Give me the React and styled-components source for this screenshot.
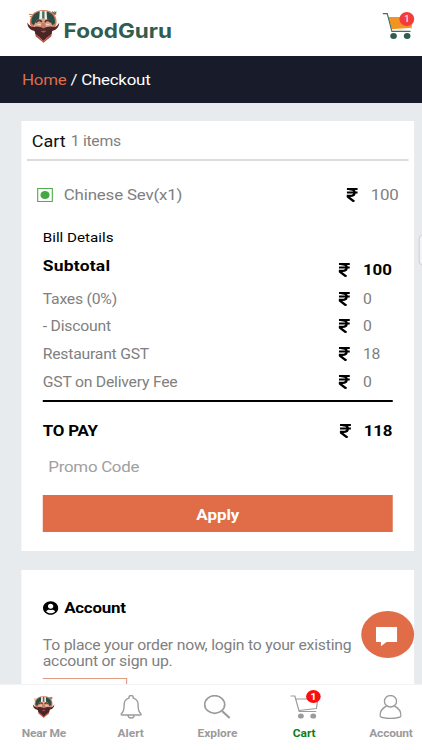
import React, { useState } from "react";
import styled, { createGlobalStyle } from "styled-components";
import { FaUserCircle } from "react-icons/fa";

const GlobalStyle = createGlobalStyle`
  * {
    box-sizing: border-box;
  }
  body {
    margin: 0;
    overflow: hidden;
    background: #e8ebee;
    font-family: Roboto, "Liberation Sans", sans-serif;
  }
`;
// 375px wide layout stretched over the wider screen
const Screen = styled.div`
  position: relative;
  width: 375px;
  height: 750px;
  overflow: hidden;
  display: flex;
  flex-direction: column;
  transform: scaleX(1.12533);
  transform-origin: 0 0;
`;
const Header = styled.header`
  height: 56px;
  flex: none;
  background: #fff;
  display: flex;
  justify-content: space-between;
  align-items: flex-start;
  padding: 10px 7.5px 0 23.5px;
`;
const Brand = styled.div`
  display: flex;
  align-items: flex-start;
`;
const BrandName = styled.span`
  font-family: Inter, sans-serif;
  font-weight: 700;
  font-size: 20px;
  line-height: 24px;
  letter-spacing: 0;
  color: #315c50;
  margin: 8.5px 0 0 4px;
`;
const HeaderCart = styled.div`
  position: relative;
  padding-top: 3px;
`;
const Badge = styled.span`
  position: absolute;
  top: ${(p) => p.$top}px;
  left: ${(p) => p.$left}px;
  width: 13.5px;
  height: 13.5px;
  border-radius: 50%;
  background: ${(p) => p.$color};
  color: #fff;
  font-size: 9px;
  line-height: 15px;
  text-align: center;
`;
const Breadcrumb = styled.nav`
  height: 46.5px;
  flex: none;
  background: #171b2a;
  color: #fff;
  font-size: 15px;
  line-height: 48px;
  padding-left: 19.5px;
  letter-spacing: ${(p) => p.$spacing}px;
`;
const Accent = styled.span`
  color: #df6d49;
`;
const Content = styled.main`
  flex: 1;
  background: #e8ebee;
  padding: 18.5px 7px 0 19.2px;
  overflow: hidden;
`;
const Card = styled.section`
  background: #fff;
  height: ${(p) => p.$height}px;
  margin-bottom: 18.5px;
  overflow: hidden;
`;
const CardHead = styled.div`
  height: 40px;
  margin: 0 5px;
  padding: 2px 0 0 4px;
  border-bottom: 2px solid #dcdcdc;
  display: flex;
  align-items: center;
  gap: 4.5px;
`;
const Text = styled.span`
  font-size: ${(p) => p.$size || 14}px;
  font-weight: ${(p) => p.$weight || 400};
  color: ${(p) => p.$color || "#808080"};
  letter-spacing: ${(p) => p.$spacing || 0}px;
  white-space: nowrap;
`;
const ItemRow = styled.div`
  height: 68px;
  display: flex;
  align-items: center;
  padding: 0 13.5px 0 13.5px;
`;
const VegMark = styled.span`
  width: 14px;
  height: 14px;
  border: 1.3px solid #4eae4b;
  display: flex;
  align-items: center;
  justify-content: center;
  margin-right: 10px;
  &::after {
    content: "";
    width: 8px;
    height: 7.5px;
    border-radius: 50%;
    background: #43a83f;
  }
`;
const Price = styled.span`
  margin-left: auto;
  display: flex;
  align-items: center;
  gap: 11.5px;
  width: ${(p) => p.$width || 48.2}px;
  padding-top: ${(p) => p.$drop || 0}px;
`;
const Bill = styled.div`
  padding: 0 18.8px;
`;
const BillTitle = styled.div`
  height: 17px;
  line-height: 17px;
  display: flex;
`;
const BillRow = styled.div`
  height: ${(p) => p.$height || 27.6}px;
  display: flex;
  align-items: center;
`;
const TotalRow = styled.div`
  height: 51px;
  margin-top: 4.6px;
  padding-top: 9px;
  border-top: 2px solid #000;
  display: flex;
  align-items: center;
`;
const PromoInput = styled.input`
  display: block;
  width: 100%;
  height: 32px;
  padding: 0 5px;
  border: 0;
  outline: none;
  font: 15px Roboto, sans-serif;
  letter-spacing: ${(p) => p.$spacing}px;
  &::placeholder {
    color: #a0a0a0;
  }
`;
const ApplyButton = styled.button`
  display: block;
  width: 100%;
  height: 37.5px;
  margin-top: 12px;
  border: 0;
  background: #e06d47;
  color: #fff;
  font: 700 15px Roboto, sans-serif;
  padding: 2px 0 0;
`;
const AccountHead = styled.h4`
  display: flex;
  align-items: center;
  gap: 5px;
  height: 20px;
  margin: 0;
`;
const AccountBody = styled.div`
  padding: 28px 18.8px 0;
`;
const AccountText = styled.p`
  margin: 20.5px 0 9px;
  font-size: 14px;
  line-height: 15.5px;
  letter-spacing: ${(p) => p.$spacing}px;
  color: #808080;
`;
const LoginButton = styled.button`
  display: block;
  width: 75px;
  height: 40px;
  border: 1px solid #e09a80;
  border-left: 0;
  background: #fff;
`;
const SideTab = styled.div`
  position: absolute;
  top: 234px;
  right: -10px;
  width: 13px;
  height: 32px;
  background: #f4f5f7;
  border: 1px solid #cfd1d6;
  border-radius: 5px;
`;
const ChatButton = styled.button`
  position: absolute;
  top: 610.5px;
  left: 320.6px;
  width: 47px;
  height: 47px;
  border: 0;
  border-radius: 50%;
  background: #e06d47;
  display: flex;
  align-items: center;
  justify-content: center;
  padding: 5px 1px 0 0;
`;
const TabBar = styled.nav`
  height: 66px;
  flex: none;
  background: #fff;
  border-top: 1px solid #f3f3f3;
  display: grid;
  grid-template-columns: repeat(5, 77.1px);
`;
const Tab = styled.button`
  position: relative;
  border: 0;
  background: none;
  padding: 7px 0 0 1px;
  display: flex;
  flex-direction: column;
  align-items: center;
  color: ${(p) => (p.$active ? "#0b7f14" : "#9b9b9b")};
  font: 700 10.6px Roboto, sans-serif;
  letter-spacing: ${(p) => p.$spacing || 0}px;
`;
const TabIcon = styled.span`
  position: relative;
  height: 30px;
  display: flex;
  align-items: center;
  margin-bottom: 5px;
`;

const Rupee = () => (
  <svg width="10" height="14" viewBox="0 0 11 14" preserveAspectRatio="none" fill="none" stroke="#000">
    <path d="M.2 1h10.600M.2 4.500h10.600" strokeWidth="1.900" />
    <path d="M2.500 1c3.500 0 5.200 1.300 5.200 3.400S6 7.900 3.500 7.900H.8v.5l6.700 5.300" strokeWidth="2.300" />
  </svg>
);

const Chef = ({ width, height }) => (
  <svg width={width} height={height} viewBox="0 0 97 100" preserveAspectRatio="none">
    <path d="M6 13l14 2M8 20l10 1M73 13l10-9M77 16l10-4" stroke="#c97857" strokeWidth="3" />
    <path d="M74 3c0 7 3 11 8 10 5 0 6-5 5-9l-6 4z" fill="#3d7560" />
    <path d="M9 45C5 18 22 0 49 0s43 18 38 45L49 99z" fill="#d67b5a" />
    <path d="M13 40C11 17 26 4 48 4s37 13 35 36L72 49H24z" fill="#284e47" />
    <path d="M38 3h20l2 27H36z" fill="#f4eee4" />
    <path d="M45 4h7v24h-7z" fill="#3f7264" />
    <path d="M20 48l9-18 19-5 19 5 9 18-7 15H28z" fill="#dfa48a" />
    <path d="M27 38c4-8 13-9 17-1M53 37c5-8 14-7 17 1" fill="none" stroke="#56322f" strokeWidth="5" />
    <path d="M31 44h10M56 44h10" stroke="#f3d5bf" strokeWidth="3" />
    <path d="M44 39h9l4 14-8 5-9-5z" fill="#c77c65" />
    <path d="M1 38c6 11 15 17 25 12 10-1 17 2 23 6 6-4 14-7 23-6 10 5 19-1 24-12-1 17-12 24-20 25L49 94 21 63C11 61 1 54 1 38z" fill="#50272b" />
    <path d="M23 66l26 30 26-30-3 14-23 19-23-19z" fill="#b65042" />
    <path d="M22 58l3 14 24 19 24-19 3-14-11 4H33z" fill="#482529" />
    <path d="M40 65q9-6 18 0l-9 4z" fill="#a65445" />
  </svg>
);

const CartArt = () => (
  <svg width="28" height="27" viewBox="0 0 95 81" preserveAspectRatio="none">
    <path d="M18 12h74l-5 35-59 4z" fill="#f39422" />
    <path d="M0 2h14l14 53h56" fill="none" stroke="#456c62" strokeWidth="3.5" />
    <path d="M28 50l58-4" stroke="#fff" strokeWidth="3" />
    <ellipse cx="33" cy="69" rx="10" ry="9" fill="#315d51" />
    <ellipse cx="74" cy="69" rx="10" ry="9" fill="#315d51" />
  </svg>
);

const BellIcon = () => (
  <svg width="19" height="24" viewBox="0 0 20 24" preserveAspectRatio="none" fill="none" stroke="currentColor" strokeWidth="1.3">
    <path d="M8 3.2V2.5a2 2 0 014 0v.7c3 .8 4.5 3.2 4.5 6.3 0 5 .5 7.500 2.500 9 .8.600.500 1.500-.5 1.500H1.500c-1 0-1.300-.900-.5-1.500 2-1.500 2.500-4 2.500-9C3.500 6.400 5 4 8 3.200zM7 20c.3 4 5.700 4 6 0" />
  </svg>
);

const SearchIcon = () => (
  <svg width="24" height="24" viewBox="0 0 27 24" preserveAspectRatio="none" fill="none" stroke="currentColor" strokeWidth="1.7">
    <ellipse cx="11" cy="9.500" rx="10" ry="8.800" />
    <path d="M18.300 16l7.700 7" strokeWidth="2.2" />
  </svg>
);

const CartIcon = () => (
  <svg width="25" height="24" viewBox="0 0 28 24" preserveAspectRatio="none" fill="none" stroke="currentColor" strokeWidth="1.2">
    <path d="M0 1h4.500l4.300 15.500h17M5.500 4h21.700L26 13.500 8.500 15.500" />
    <ellipse cx="10.500" cy="21" rx="2.900" ry="2.600" fill="currentColor" stroke="none" />
    <ellipse cx="22.800" cy="21" rx="2.900" ry="2.600" fill="currentColor" stroke="none" />
  </svg>
);

const PersonIcon = () => (
  <svg width="20" height="24" viewBox="0 0 23 24" preserveAspectRatio="none" fill="none" stroke="currentColor" strokeWidth="1.400">
    <ellipse cx="11.500" cy="6.300" rx="6.200" ry="5.700" />
    <path d="M7.500 11C3.500 13 .8 17 .8 20.500c0 1 .5 1.500 1.500 1.800 5 1.300 13.400 1.300 18.400 0 1-.3 1.500-.8 1.500-1.800 0-3.500-2.700-7.500-6.700-9.500" />
  </svg>
);

const charges = [
  { name: "Taxes (0%)", amount: 0 },
  { name: "- Discount", amount: 0 },
  { name: "Restaurant GST", amount: 18 },
  { name: "GST on Delivery Fee", amount: 0 },
];

const tabs = [
  { name: "Near Me", icon: <Chef width={19.5} height={22} />, spacing: -0.15 },
  { name: "Alert", icon: <BellIcon /> },
  { name: "Explore", icon: <SearchIcon /> },
  { name: "Cart", icon: <CartIcon />, badge: 1 },
  { name: "Account", icon: <PersonIcon />, spacing: -0.15 },
];

const App = () => {
  const [promo, setPromo] = useState("");
  const [active, setActive] = useState("Cart");

  return (
    <>
      <GlobalStyle />
      <Screen>
        <Header>
          <Brand>
            <Chef width={29} height={33} />
            <BrandName>FoodGuru</BrandName>
          </Brand>
          <HeaderCart>
            <CartArt />
            <Badge $top={2} $left={15.2} $color="#f23b3b">1</Badge>
          </HeaderCart>
        </Header>
        <Breadcrumb $spacing={-0.2}>
          <Accent>Home</Accent> / Checkout
        </Breadcrumb>
        <Content>
          <Card $height={430}>
            <CardHead>
              <Text $size={16} $color="#111">Cart</Text>
              <Text $size={14} $spacing={-0.25}>1 items</Text>
            </CardHead>
            <ItemRow>
              <VegMark />
              <Text $size={15} $spacing={-0.15}>Chinese Sev(x1)</Text>
              <Price $width={46.6}>
                <Rupee />
                <Text $size={15} $spacing={-0.15}>100</Text>
              </Price>
            </ItemRow>
            <Bill>
              <BillTitle>
                <Text $size={13.5} $color="#000">Bill Details</Text>
              </BillTitle>
              <BillRow $height={39}>
                <Text $size={15.5} $weight={700} $spacing={0.2} $color="#000">Subtotal</Text>
                <Price $drop={8.5}>
                  <Rupee />
                  <Text $size={15} $weight={700} $color="#000">100</Text>
                </Price>
              </BillRow>
              {charges.map((charge) => (
                <BillRow key={charge.name}>
                  <Text $spacing={-0.2}>{charge.name}</Text>
                  <Price>
                    <Rupee />
                    <Text $spacing={-0.2}>{charge.amount}</Text>
                  </Price>
                </BillRow>
              ))}
              <TotalRow>
                <Text $size={15} $weight={700} $spacing={-0.2} $color="#000">TO PAY</Text>
                <Price $width={47.5}>
                  <Rupee />
                  <Text $size={15} $weight={700} $spacing={-0.2} $color="#000">118</Text>
                </Price>
              </TotalRow>
              <PromoInput
                $spacing={-0.25}
                placeholder="Promo Code"
                value={promo}
                onChange={(e) => setPromo(e.target.value)}
              />
              <ApplyButton>Apply</ApplyButton>
            </Bill>
          </Card>
          <Card $height={200}>
            <AccountBody>
              <AccountHead>
                <FaUserCircle size={14} />
                <Text $size={15} $weight={700} $spacing={-0.2} $color="#000">Account</Text>
              </AccountHead>
              <AccountText $spacing={-0.19}>
                To place your order now, login to your existing
                <br />
                account or sign up.
              </AccountText>
              <LoginButton />
            </AccountBody>
          </Card>
        </Content>
        <SideTab />
        <ChatButton>
          <svg width="19" height="20" viewBox="0 0 19 20">
            <path d="M0 0h19v15H9.500l-5 4.300V15H0z" fill="#fff" />
          </svg>
        </ChatButton>
        <TabBar>
          {tabs.map((tab) => (
            <Tab
              key={tab.name}
              $active={tab.name === active}
              $spacing={tab.spacing}
              onClick={() => setActive(tab.name)}
            >
              <TabIcon style={{ color: "#9b9b9b" }}>
                {tab.icon}
                {tab.badge && <Badge $top={-2.5} $left={14} $color="#f90f0f">{tab.badge}</Badge>}
              </TabIcon>
              {tab.name}
            </Tab>
          ))}
        </TabBar>
      </Screen>
    </>
  );
};

export default App;
